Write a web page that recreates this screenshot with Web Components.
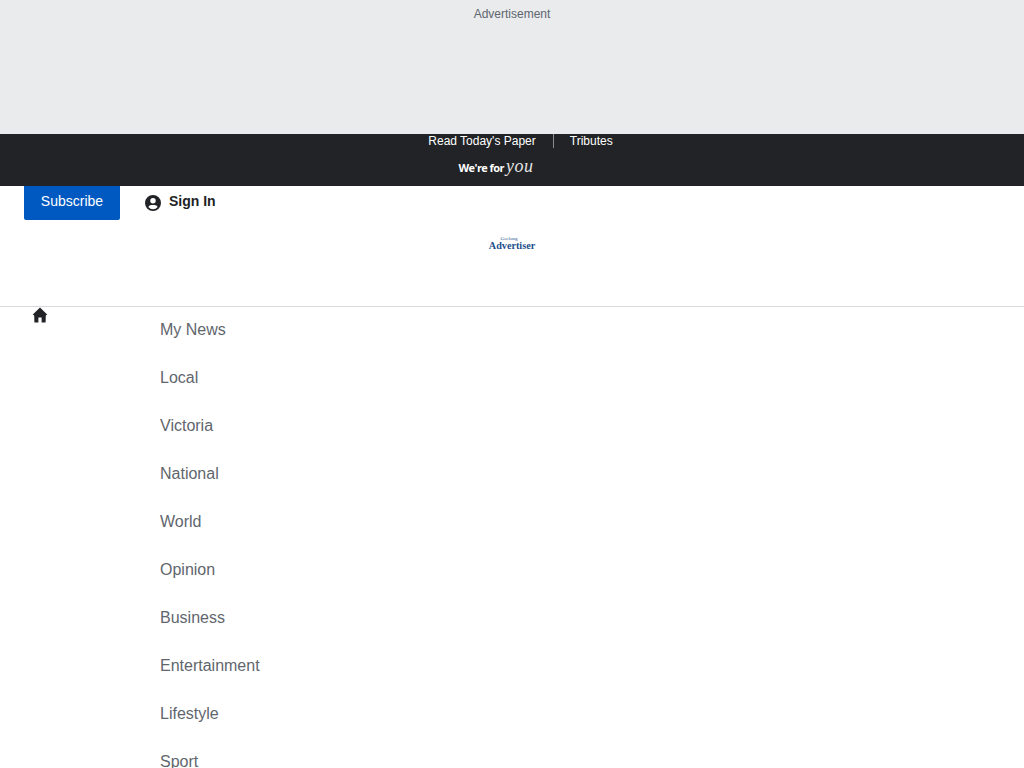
<!DOCTYPE html>
<html lang="en">
<head>
<meta charset="utf-8">
<title>Geelong Advertiser</title>
<style>
html, body { margin: 0; padding: 0; background: #fff; }
body { height: 768px; overflow: hidden; font-family: "Liberation Sans", Arial, sans-serif; }
</style>
</head>
<body>
<ad-banner>Advertisement</ad-banner>
<top-strip></top-strip>
<site-header></site-header>
<main-nav>
  <nav-item>My News</nav-item>
  <nav-item>Local</nav-item>
  <nav-item>Victoria</nav-item>
  <nav-item>National</nav-item>
  <nav-item>World</nav-item>
  <nav-item>Opinion</nav-item>
  <nav-item>Business</nav-item>
  <nav-item>Entertainment</nav-item>
  <nav-item>Lifestyle</nav-item>
  <nav-item>Sport</nav-item>
</main-nav>

<script>
// small helper so each element is just a style + markup string
function define(name, html) {
  const template = document.createElement('template');
  template.innerHTML = html;
  customElements.define(name, class extends HTMLElement {
    constructor() {
      super();
      this.attachShadow({mode: 'open'});
      this.shadowRoot.append(template.content.cloneNode(true));
    }
  });
}

define('ad-banner', `
<style>
:host {
  display: block;
  height: 134px;
  padding-top: 7px;
  box-sizing: border-box;
  background: #e9ebed;
  color: #5f666d;
  font-size: 12px;
  line-height: 14px;
  text-align: center;
}
</style>
<slot></slot>
`);

define('top-strip', `
<style>
:host {
  display: block;
  height: 52px;
  background: #212326;
  color: #fff;
}
.links {
  display: flex;
  justify-content: center;
  align-items: center;
  height: 14px;
  padding-left: 17px;
  font-size: 12px;
  line-height: 14px;
}
.links span + span {
  margin-left: 17px;
  padding-left: 16px;
  border-left: 1px solid #8a8d90;
}
.tag {
  display: flex;
  justify-content: center;
  align-items: baseline;
  margin-top: 8px;
  padding-right: 32px;
  height: 20px;
  line-height: 20px;
}
.tag b {
  font-family: "Open Sans", sans-serif;
  font-size: 11px;
  font-weight: 700;
  letter-spacing: -0.55px;
}
.tag i {
  font-family: "Liberation Serif", serif;
  font-size: 18px;
  font-weight: 400;
  margin-left: 2px;
  letter-spacing: 0.5px;
  color: #e4e4e4;
}
</style>
<div class="links"><span>Read Today's Paper</span><span>Tributes</span></div>
<div class="tag"><b>We're for</b><i>you</i></div>
`);

define('site-header', `
<style>
:host {
  display: block;
  height: 121px;
  box-sizing: border-box;
  border-bottom: 1px solid #d8dadc;
  background: #fff;
}
.actions {
  display: flex;
  align-items: flex-start;
  padding-left: 24px;
}
.subscribe {
  width: 96px;
  height: 34px;
  box-sizing: border-box;
  padding-top: 8px;
  background: #0059c1;
  border-radius: 0 0 2px 2px;
  color: #fff;
  font-size: 14px;
  line-height: 15px;
  text-align: center;
}
.sign-in {
  display: flex;
  align-items: flex-start;
  margin-left: 25px;
  color: #212326;
  font-size: 14px;
  font-weight: 700;
  line-height: 15px;
  padding-top: 8px;
}
.sign-in svg {
  width: 16px;
  height: 16px;
  margin: 1px 8px 0 0;
  fill: #212326;
}
.logo {
  margin-top: 16px;
  text-align: center;
  color: #1c4f8c;
  font-family: "Liberation Serif", serif;
  font-weight: 700;
}
.logo small {
  display: block;
  height: 5px;
  font-size: 5px;
  line-height: 5px;
  font-weight: 400;
  padding-right: 6px;
}
.logo span {
  display: block;
  font-size: 10.2px;
  line-height: 10px;
}
</style>
<div class="actions">
  <div class="subscribe">Subscribe</div>
  <div class="sign-in">
    <svg viewBox="0 0 24 24" aria-hidden="true"><path d="M12 0a12 12 0 1 0 0 24 12 12 0 0 0 0-24Zm0 4.4a4.1 4.1 0 1 1 0 8.2 4.1 4.1 0 0 1 0-8.2Zm0 16.8a9.2 9.2 0 0 1-7-3.3c.9-1.7 2.6-2.9 4.6-2.9h4.8c2 0 3.7 1.2 4.6 2.9a9.2 9.2 0 0 1-7 3.3Z"/></svg>
    <span>Sign In</span>
  </div>
</div>
<div class="logo"><small>Geelong</small><span>Advertiser</span></div>
`);

define('main-nav', `
<style>
:host {
  display: flex;
  background: #fff;
}
.home {
  flex: 0 0 128px;
  padding-left: 32px;
}
.home svg {
  display: block;
  width: 16px;
  height: 16px;
  fill: #212326;
}
.items {
  display: flex;
  flex-direction: column;
}
</style>
<div class="home">
  <svg viewBox="0 0 16 16" aria-hidden="true"><path d="M8 0.5 0.8 7.6 2.2 8.5 2.4 15.5H6.4V10.4H9.6V15.5H13.6L13.8 8.5 15.2 7.6 8 0.5Z"/></svg>
</div>
<div class="items"><slot></slot></div>
`);

define('nav-item', `
<style>
:host {
  display: block;
  height: 48px;
  box-sizing: border-box;
  padding-top: 11px;
  color: #5f666d;
  font-size: 16px;
  line-height: 24px;
}
</style>
<slot></slot>
`);
</script>
</body>
</html>
